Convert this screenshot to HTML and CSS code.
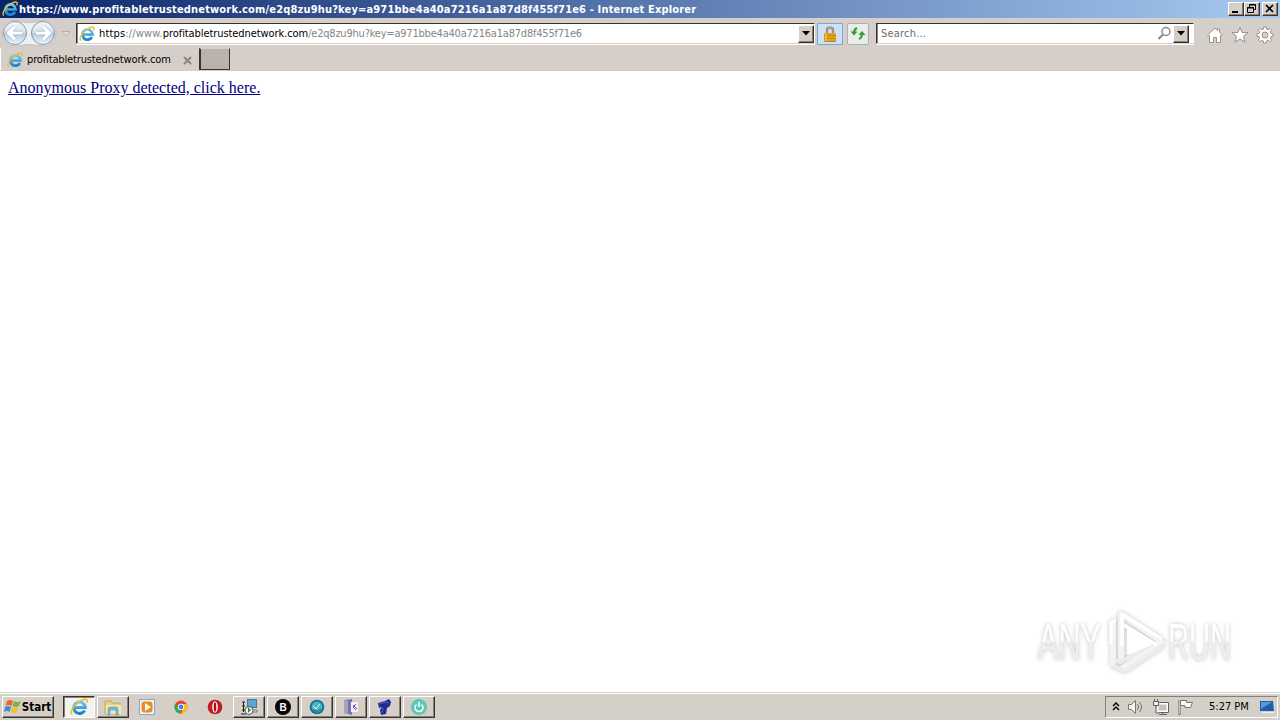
FILE: index.html
```html
<!DOCTYPE html>
<html lang="en">
<head>
    <meta charset="UTF-8">
    <meta name="viewport" content="width=device-width, initial-scale=1.0">
    <title>profitabletrustednetwork.com</title>
    <link rel="stylesheet" href="styles.css">
</head>
<body>
    <!-- Shared icons -->
    <svg class="sprite" width="0" height="0">
        <defs>
            <linearGradient id="blue" x1="0" y1="0" x2="0" y2="1">
                <stop offset="0" stop-color="#69c8f3"></stop>
                <stop offset="1" stop-color="#1c82cc"></stop>
            </linearGradient>
            <linearGradient id="ball" x1="0" y1="0" x2="0" y2="1">
                <stop offset="0" stop-color="#f5f8fb"></stop>
                <stop offset=".48" stop-color="#d5e1ed"></stop>
                <stop offset=".52" stop-color="#b5cadf"></stop>
                <stop offset="1" stop-color="#e8f6ff"></stop>
            </linearGradient>
            <linearGradient id="mark" gradientUnits="userSpaceOnUse" x1="0" y1="18" x2="0" y2="57">
                <stop offset=".48" stop-color="#ffffff"></stop>
                <stop offset=".52" stop-color="#eeeeee"></stop>
            </linearGradient>
        </defs>
        <symbol id="ie" viewBox="0 0 16 16">
            <path d="M13 11a5.1 5.1 0 1 1 .6-2.5H4" fill="none" stroke="url(#blue)" stroke-width="2.7"></path>
            <path d="M2 14.5C-.5 13.5 2 8 6.500 4.500C10.500 1 15 0 15.200 2.200c.1.700-.2 1.500-.6 2.200" fill="none" stroke="#efbd2e" stroke-width="1.400"></path>
        </symbol>
    </svg>

    <header class="titlebar">
        <svg class="title-icon" width="16" height="16"><use href="#ie"></use></svg>
        <h1>https://www.profitabletrustednetwork.com/e2q8zu9hu?key=a971bbe4a40a7216a1a87d8f455f71e6 - Internet Explorer</h1>
        <div class="window-buttons">
            <button class="raised"><svg width="12" height="10"><path d="M2 8h6" stroke="#000" stroke-width="2"></path></svg></button>
            <button class="raised"><svg width="12" height="10" fill="none" stroke="#000"><path d="M3.500 3V.5h6v5H8M3 1h7M1.500 3.500h6v5h-6zM1 4h7"></path></svg></button>
            <button class="raised close"><svg width="12" height="10"><path d="M2 1l7 7M9 1L2 8" stroke="#000" stroke-width="1.700"></path></svg></button>
        </div>
    </header>

    <nav class="toolbar">
        <svg class="history" width="76" height="30">
            <path d="M15 2Q29 7 43 2A13 13 0 0 1 43 28Q29 25 15 28A13 13 0 0 1 15 2" fill="#edf0f2" stroke="#c2c0be"></path>
            <g fill="url(#ball)" stroke="#8796a5">
                <circle cx="15" cy="15" r="11.500"></circle>
                <circle cx="43" cy="15" r="11.500"></circle>
            </g>
            <g fill="none" stroke="#a1b4c7" stroke-width="4.400"><path d="M22 15H9M15 8.500L8.500 15l6.500 6.500M36 15h13M43 8.500l6.500 6.500-6.500 6.500"></path></g>
            <g fill="none" stroke="#fff" stroke-width="3.200"><path d="M22 15H9M15 8.500L8.500 15l6.500 6.500M36 15h13M43 8.500l6.500 6.500-6.500 6.500"></path></g>
            <path d="M62 13.500h8l-4 4z" fill="#e4e1de" stroke="#b4afaa"></path>
        </svg>
        <div class="field address">
            <svg width="16" height="16"><use href="#ie"></use></svg>
            <span class="url"><span class="scheme"><b>https</b>://www.</span><span class="domain">profitabletrustednetwork.com</span><span class="path">/e2q8zu9hu?key=a971bbe4a40a7216a1a87d8f455f71e6</span></span>
            <button class="raised drop"><svg width="8" height="5"><path d="M0 0h8L4 4.500z"></path></svg></button>
        </div>
        <button class="lock">
            <svg width="14" height="16">
                <path d="M4 8V4.500a3 3 0 0 1 6 0V8" fill="none" stroke="#766b55" stroke-width="2.200"></path>
                <path d="M4 8V4.500a3 3 0 0 1 6 0V8" fill="none" stroke="#d6c798" stroke-width=".9"></path>
                <rect x="1" y="7" width="12" height="9" rx="1" fill="#e0a51c"></rect>
                <path d="M1 9.500h12M1 12.500h12M1 15.500h12" stroke="#c4880f"></path>
                <path d="M3 8v7" stroke="#ffd968"></path>
            </svg>
        </button>
        <button class="refresh">
            <svg width="16" height="14" fill="none" stroke="#329e31" stroke-width="2"><path d="M7 1Q4 2 4 6M9 12q3-1 3-5"></path><path d="M.5 4.500h7L4 8.500zM8.500 8h7L12 4z" fill="#329e31" stroke="none"></path></svg>
        </button>
        <div class="field search">
            <span>Search...</span>
            <svg width="15" height="15" fill="none" stroke="#8a8a8a"><circle cx="9" cy="5.500" r="4" stroke-width="1.500"></circle><path d="M6 8.500l-4.500 4.500" stroke-width="2.200"></path></svg>
            <button class="raised drop"><svg width="8" height="5"><path d="M0 0h8L4 4.500z"></path></svg></button>
        </div>
        <div class="tools">
            <svg width="18" height="18" viewBox="0 0 18 18"><path d="M1.500 9L9 2l2.500 2.300V3h2v3.200L16.500 9l-1.200 1.200-.8-.7v7h-4v-5h-3v5h-4v-7l-.8.700z"></path></svg>
            <svg width="18" height="18" viewBox="0 0 18 18"><path d="M9 1l2.100 5.500 5.900.2-4.600 3.700 1.600 5.800L9 12.900l-5 3.300 1.600-5.800L1 6.700l5.900-.2z"></path></svg>
            <svg width="18" height="18" viewBox="0 0 18 18"><path d="M7.700 1h2.600l.4 2.200 1.300.5 1.800-1.200 1.800 1.800-1.300 1.800.6 1.300 2.100.4v2.500l-2.100.4-.6 1.300 1.300 1.800-1.800 1.800-1.800-1.200-1.300.5-.4 2.200H7.700l-.4-2.200-1.300-.5-1.800 1.200-1.800-1.800L3.700 12l-.6-1.300-2.100-.4V7.800l2.100-.4.600-1.300-1.300-1.800 1.800-1.800L6 3.700l1.300-.5z"></path><circle cx="9" cy="9" r="3" fill="#d6cec8"></circle></svg>
        </div>
    </nav>

    <div class="tabs">
        <div class="tab">
            <svg width="16" height="16"><use href="#ie"></use></svg>
            <span>profitabletrustednetwork.com</span>
            <svg class="tab-close" width="9" height="9"><path d="M1 1l7 7M8 1L1 8" stroke="#8b8682" stroke-width="2"></path></svg>
        </div>
        <button class="new-tab"></button>
    </div>

    <main>
        <a href="#">Anonymous Proxy detected, click here.</a>
        <svg class="watermark" width="220" height="80" viewBox="0 0 220 80">
            <g fill="url(#mark)">
                <text x="8" y="56" textLength="63" lengthAdjust="spacingAndGlyphs">ANY</text>
                <text x="138" y="56" textLength="63" lengthAdjust="spacingAndGlyphs">RUN</text>
            </g>
            <g fill="none" stroke-linejoin="round">
                <path d="M83 62V17M91 57V10L132 38 91 65" stroke="#f3f3f3" stroke-width="6"></path>
                <path d="M83 62l12 5 38-25M84 56l7 2 33-19" stroke="#ececec" stroke-width="4"></path>
                <path d="M81 40V18l5-2M92 42V10l40 25M92 20l35 21" stroke="#fff" stroke-width="3.500"></path>
                <path d="M98 50V26l23 14z" fill="#fff" stroke="#fff" stroke-width="2"></path>
            </g>
        </svg>
    </main>

    <footer class="taskbar">
        <button class="raised start">
            <svg width="18" height="16">
                <path d="M3 2q3-2 6 0L7.500 7Q4 5 1.500 7z" fill="#ed642e"></path>
                <path d="M10 2q3 2 7 0l-2 5q-3 2-6.500 0z" fill="#75b63c"></path>
                <path d="M1 8q3-2 6 0l-1.500 5Q3 11 0 13z" fill="#438bd4"></path>
                <path d="M8 8q3 2 6.500 0L13 13q-3 2-6.500 0z" fill="#f6bd31"></path>
            </svg>
            <span>Start</span>
        </button>
        <div class="tasks">
            <button class="raised task active"><svg width="18" height="18"><use href="#ie"></use></svg></button>
            <button class="raised task"><svg width="18" height="18"><path d="M1 3h6l1 2h8v11H1z" fill="#e9cf77" stroke="#c4a65b"></path><path d="M2 7h15v9H2z" fill="#f7e8a5"></path><path d="M4 17v-6q0-2 2-2h6q2 0 2 2v6h-2v-5H6v5z" fill="#72bde2" stroke="#5398bd" stroke-width=".6"></path></svg></button>
            <button class="task"><svg width="18" height="18"><rect x="1.500" y="1.500" width="15" height="15" fill="#edf4fa" stroke="#78aed9"></rect><rect x="3.500" y="3.500" width="11" height="11" rx="3" fill="#f08a1c"></rect><path d="M7 5l6 4-6 4z" fill="#fff"></path></svg></button>
            <button class="task"><svg width="18" height="18"><circle cx="9" cy="9" r="6.500" fill="#e74235"></circle><path d="M3.500 5.500l3.500 5L9 15.500a6.500 6.500 0 0 1-5.500-10" fill="#35a853"></path><path d="M9 6h5.700A6.500 6.500 0 0 1 9 15.500l2.500-5z" fill="#fbc116"></path><circle cx="9" cy="9" r="3.200" fill="#fff"></circle><circle cx="9" cy="9" r="2.400" fill="#4285e8"></circle></svg></button>
            <button class="task"><svg width="18" height="18"><circle cx="9" cy="9" r="7.300" fill="#c21c22"></circle><ellipse cx="9" cy="9" rx="2.800" ry="5.800" fill="#fff"></ellipse><ellipse cx="9" cy="9" rx="1.300" ry="4.800" fill="#a90f17"></ellipse></svg></button>
            <button class="raised task"><svg width="18" height="18"><rect x="7.500" y="1.500" width="9" height="8" fill="#55a7d5" stroke="#557286"></rect><path d="M9 12h8v2H8" fill="#e8e5d7" stroke="#777"></path><path d="M2 4h3M3.500 4v10M1 16h5M2 8h3M2 12h4" fill="none" stroke="#222"></path><circle cx="9" cy="12.500" r="4" fill="#f7f7f7" stroke="#555"></circle><path d="M8 9v6l3-3z" fill="#21943a"></path></svg></button>
            <button class="raised task"><svg width="18" height="18"><circle cx="9" cy="9" r="8" fill="#050505"></circle><text class="b-logo" x="9" y="12.500">B</text></svg></button>
            <button class="raised task"><svg width="18" height="18"><circle cx="9" cy="9" r="7.300" fill="#17728b"></circle><circle cx="9" cy="9" r="5.400" fill="#48b8c7"></circle><path d="M5 8l3 3 4-5" fill="none" stroke="#dffaff"></path><path d="M5 12q4 3 8-1" fill="none" stroke="#115f7d"></path></svg></button>
            <button class="raised task"><svg width="18" height="18"><path d="M2 2l8-1v16l-8-2z" fill="#7377a9"></path><path d="M2 2l4 1v13l-4-1z" fill="#a5a6bd"></path><rect x="9" y="4" width="7" height="10" fill="#f4f0ff"></rect><path d="M14 6l-3 3 3 3M11 7l4 4" fill="none" stroke="#7851ad"></path></svg></button>
            <button class="raised task"><svg width="18" height="18"><path d="M2 5l7-2 4-2 2 3-1 4-3 2-1 6-5 1-1-5 2-3-3 1z" fill="#202a94"></path><path d="M3 6l7-2 3 1M7 10l-1 5" fill="none" stroke="#5362cb"></path></svg></button>
            <button class="raised task"><svg width="18" height="18"><circle cx="9" cy="9" r="8" fill="#58c8b7"></circle><path d="M6.500 6.500a4 4 0 1 0 5 0M9 4v5" fill="none" stroke="#fff" stroke-width="1.500"></path></svg></button>
        </div>
        <div class="tray">
            <svg width="8" height="12" fill="none" stroke="#000" stroke-width="1.400"><path d="M1 5l3-3 3 3M1 9l3-3 3 3"></path></svg>
            <svg width="18" height="16" fill="none" stroke="#777"><path d="M1.500 5.500h3l4-4v13l-4-4h-3z" fill="#f5f5f3"></path><path d="M10.500 5q2 3 0 6M12.500 3q4 5 0 10"></path></svg>
            <svg width="18" height="18" fill="none" stroke="#65615d"><rect x="5.500" y="5.500" width="10" height="8" fill="#c5c3bd" stroke="#fff" stroke-width="2"></rect><path d="M4.500 4.500h12v10h-12zM7 16.500h8M10.500 14v2"></path><path d="M1.500 3.500h5v4h-5zM2.500 1v2M5.500 1v2M4 8v7h3" fill="#eee"></path></svg>
            <svg width="18" height="18"><path d="M2.500 2v15" stroke="#65615d" stroke-width="2"></path><path d="M2.500 2v14" stroke="#eee" stroke-width=".7"></path><path d="M3.500 2.500h6v2h6l-2 5H8v-2H3.500z" fill="#fafafa" stroke="#77726d"></path></svg>
            <time>5:27 PM</time>
            <svg class="desktop" width="16" height="16"><path d="M1 2h13l1 10H1z" fill="#225eaf"></path><path d="M2 3h11L2 10z" fill="#5599d7"></path><path d="M3 13h12v1H3z" fill="#e9f1f6"></path></svg>
        </div>
    </footer>
</body>
</html>
```
FILE: styles.css
```css
* {
    box-sizing: border-box;
}

body {
    display: flex;
    flex-direction: column;
    width: 1280px;
    height: 720px;
    margin: 0;
    overflow: hidden;
    background: #fff;
    font: 11px/14px "DejaVu Sans Condensed", "DejaVu Sans", sans-serif;
}

button {
    display: flex;
    align-items: center;
    justify-content: center;
    flex: none;
    margin: 0;
    padding: 0;
    border: 0;
    background: #d6cfc8;
    color: #000;
    font: inherit;
}

svg {
    display: block;
    flex: none;
}

.sprite {
    position: absolute;
}

.raised {
    border: 1px solid;
    border-color: #fff #39332f #39332f #fff;
    box-shadow: inset -1px -1px #858078;
}

.titlebar {
    display: flex;
    align-items: center;
    flex: none;
    height: 18px;
    padding: 0 2px;
    background: linear-gradient(90deg, #0a246a, #a6caf0);
    color: #fff;
}

.titlebar h1 {
    flex: 1;
    margin: 0 0 0 1px;
    padding-top: 1px;
    font-size: 11px;
    font-weight: bold;
    letter-spacing: 0.165px;
    white-space: nowrap;
}

.window-buttons {
    display: flex;
}

.window-buttons button {
    width: 16px;
    height: 14px;
}

.window-buttons .close {
    margin-left: 2px;
}

.toolbar {
    display: flex;
    flex: none;
    height: 30px;
    padding-top: 4px;
    background: #d6cec8;
    border-top: 1px solid #d4d0c8;
}

.history {
    margin-top: -5px;
}

.field {
    display: flex;
    align-items: center;
    height: 21px;
    background: #fff;
    border: 1px solid #39332f;
    border-right-color: #fff;
    border-bottom-color: #d8cfc9;
    box-shadow: inset 1px 0 #85807a, 0 1px #fff;
}

.address {
    width: 739px;
    padding-left: 2px;
}

.url {
    flex: 1;
    margin-left: 4px;
    padding-top: 1px;
    white-space: nowrap;
}

.scheme,
.path {
    color: #858585;
}

.scheme {
    letter-spacing: 0.16px;
}

.domain {
    letter-spacing: -0.08px;
}

.path {
    letter-spacing: -0.21px;
}

.scheme b {
    color: #000;
    font-weight: normal;
}

.drop {
    width: 16px;
    height: 18px;
}

.lock {
    width: 26px;
    height: 22px;
    margin-left: 2px;
    border: 1px solid #78a7dc;
    background: #cee1f7;
}

.refresh {
    width: 22px;
    height: 22px;
    margin: 0 7px 0 4px;
    border: 1px solid #aeb0b0;
    border-radius: 2px;
    background: #e8edeb;
}

.search {
    width: 318px;
    padding: 0 4px;
    color: #6d6d6d;
}

.search span {
    flex: 1;
    padding-top: 1px;
    letter-spacing: 0.2px;
}

.search svg {
    margin-right: 1px;
}

.search .drop svg {
    margin: 0;
}

.tools {
    display: flex;
    gap: 7px;
    margin: 3px 0 0 12px;
}

.tools svg {
    fill: #fff;
    stroke: #98928d;
}

.tabs {
    display: flex;
    flex: none;
    height: 23px;
    background: #d6cec8;
    border-bottom: 1px solid #d4d0c8;
}

.tab {
    display: flex;
    align-items: center;
    width: 199px;
    padding: 2px 7px 0 6px;
    border-left: 1px solid #fff;
}

.tab span {
    margin-left: 4px;
    flex: 1;
    letter-spacing: -0.14px;
    white-space: nowrap;
}

.new-tab {
    width: 31px;
    height: 22px;
    border: 1px solid #39332f;
    border-top-color: #d6cec8;
    border-width: 1px 1px 1px 2px;
    background: #bcb2ac;
}

main {
    position: relative;
    flex: 1;
    padding: 8px;
    font: 16px/18px "Liberation Serif", serif;
}

main a {
    color: #000080;
}

.watermark {
    position: absolute;
    right: 30px;
    bottom: 8px;
    filter: drop-shadow(0 0 2px #c4c4c4);
    font: 52px "Liberation Sans Narrow", "Liberation Sans", sans-serif;
}

.taskbar {
    display: flex;
    flex: none;
    height: 28px;
    padding: 3px 2px 2px;
    border-top: 1px solid #d4d0c8;
    background: #d4d0c8;
    box-shadow: inset 0 1px #fff;
}

.start {
    width: 52px;
    font-weight: bold;
    font-size: 11.5px;
}

.start svg {
    margin-left: -1px;
}

.tasks {
    display: flex;
    gap: 2px;
    margin-left: 9px;
}

.task {
    width: 32px;
}

.active {
    border-color: #39332f #fff #fff #39332f;
    box-shadow: inset 1px 1px #858078;
    background: #f4f2ef;
}

.b-logo {
    fill: #fff;
    font: bold 10px "Liberation Sans", sans-serif;
    text-anchor: middle;
}

.tray {
    display: flex;
    align-items: center;
    gap: 7px;
    width: 173px;
    margin-left: auto;
    padding-left: 6px;
    border: 1px solid;
    border-color: #858078 #fff #fff #858078;
}

.tray time {
    margin-left: 7px;
    white-space: nowrap;
}

.desktop {
    margin-left: 3px;
}
```
